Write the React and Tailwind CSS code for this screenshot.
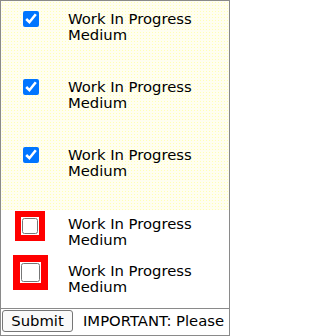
import React from "react";

const tasks = [
  { id: 1, done: true, h: "h-[68px]" },
  { id: 2, done: true, h: "h-[68px]" },
  { id: 3, done: true, h: "h-[73px]" },
];

const TaskText = () => (
  <div className="flex flex-col">
    <span>Work In Progress</span>
    <span>Medium</span>
  </div>
);

export default function App() {
  return (
    <div className="w-[230px] h-[336px] border border-[#8a8a8a] flex flex-col overflow-hidden bg-white font-['DejaVu_Sans',Verdana,sans-serif] text-[14.8px] leading-4 text-black">
      <div className="h-[308px] border-b border-[#8a8a8a] flex flex-col">
        {/* checked rows, highlighted */}
        <div className="flex flex-col bg-[#fffef0] bg-[radial-gradient(#ffffb4_0.9px,transparent_1px)] bg-[length:3px_3px]">
          {tasks.map((t) => (
            <div key={t.id} className={`flex items-start pt-[10px] ${t.h}`}>
              <div className="w-[67px] pl-[22px] flex">
                <input type="checkbox" defaultChecked={t.done} className="w-4 h-4 m-0" />
              </div>
              <TaskText />
            </div>
          ))}
        </div>

        {/* unchecked rows, flagged in red */}
        <div className="flex items-start h-[47px]">
          <div className="w-[67px] pl-[14px] pt-px flex">
            <span className="inline-flex border-[6px] border-[#ff0000] p-px bg-white">
              <input type="checkbox" className="w-4 h-4 m-0" />
            </span>
          </div>
          <div className="pt-[6px]">
            <TaskText />
          </div>
        </div>
        <div className="flex items-start pt-[6px]">
          <div className="w-[67px] pl-[12px] -mt-[8px] flex">
            <span className="inline-flex border-[7px] border-[#ff0000] p-px bg-white">
              <input type="checkbox" className="w-[19px] h-[19px] m-0" />
            </span>
          </div>
          <TaskText />
        </div>
      </div>

      <div className="flex items-center gap-[10px] pl-px pt-px whitespace-nowrap">
        <button
          type="button"
          className="h-[22px] w-[71px] border border-[#767676] rounded-[3px] bg-[#f9f9f9] text-[14.8px] leading-4"
        >
          Submit
        </button>
        <span>IMPORTANT: Please</span>
      </div>
    </div>
  );
}
